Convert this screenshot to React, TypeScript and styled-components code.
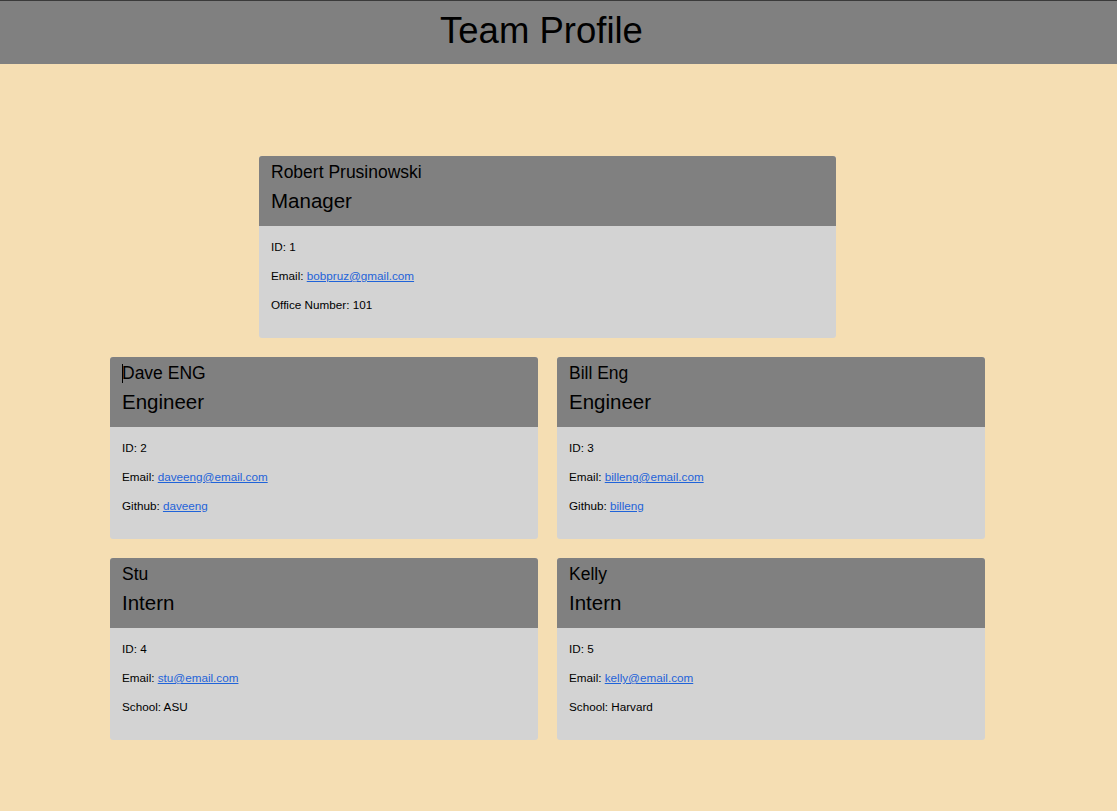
import React from "react";
import styled, { createGlobalStyle } from "styled-components";

const GlobalStyle = createGlobalStyle`
  html, body {
    margin: 0;
    padding: 0;
    background: #f5deb3;
    font-family: "Liberation Sans", Arial, sans-serif;
    color: #000;
  }
  * { box-sizing: border-box; }
`;

const Header = styled.header`
  height: 64px;
  background: #808080;
  border-top: 1px solid #3a3a3a;
  display: flex;
  align-items: center;
  justify-content: center;
  padding-right: 34px;
`;

const Title = styled.h1`
  margin: 0;
  font-size: 36.5px;
  font-weight: 400;
  line-height: 1;
  transform: translateY(-1px);
`;

const Main = styled.main`
  padding: 92px 22px 40px 0;
`;

const Grid = styled.div`
  width: 875px;
  margin: 0 auto;
  display: grid;
  grid-template-columns: 428px 428px;
  column-gap: 19px;
  row-gap: 19px;
  justify-content: center;
`;

const CardBox = styled.section<{ $wide?: boolean }>`
  border-radius: 3px;
  overflow: hidden;
  background: #d3d3d3;
  ${(p) =>
    p.$wide
      ? `grid-column: 1 / span 2; width: 577px; justify-self: center;`
      : ``}
`;

const CardHead = styled.div`
  background: #808080;
  height: 70px;
  padding: 6px 12px 0;
`;

const Name = styled.h3`
  margin: 0;
  font-size: 17.5px;
  font-weight: 400;
  line-height: 21px;
`;

const Role = styled.h4`
  margin: 6px 0 0;
  font-size: 20.5px;
  font-weight: 400;
  line-height: 24px;
`;

const Caret = styled.span`
  display: inline-block;
  width: 1px;
  height: 19px;
  background: #000;
  vertical-align: -4px;
  margin-right: -1px;
`;

const CardBody = styled.div`
  height: 112px;
  padding: 14px 12px 0;
`;

const Line = styled.p`
  margin: 0 0 15px;
  font-size: 11.7px;
  line-height: 14px;
`;

const Link = styled.a`
  color: #1f63d9;
  text-decoration: underline;
`;

type Member = {
  name: string;
  role: string;
  id: number;
  email: string;
  extraLabel: string;
  extra: string;
  extraLink?: boolean;
  caret?: boolean;
};

const manager: Member = {
  name: "Robert Prusinowski",
  role: "Manager",
  id: 1,
  email: "bobpruz@gmail.com",
  extraLabel: "Office Number",
  extra: "101",
};

const team: Member[] = [
  { name: "Dave ENG", role: "Engineer", id: 2, email: "daveeng@email.com", extraLabel: "Github", extra: "daveeng", extraLink: true, caret: true },
  { name: "Bill Eng", role: "Engineer", id: 3, email: "billeng@email.com", extraLabel: "Github", extra: "billeng", extraLink: true },
  { name: "Stu", role: "Intern", id: 4, email: "stu@email.com", extraLabel: "School", extra: "ASU" },
  { name: "Kelly", role: "Intern", id: 5, email: "kelly@email.com", extraLabel: "School", extra: "Harvard" },
];

function Card({ m, wide }: { m: Member; wide?: boolean }) {
  return (
    <CardBox $wide={wide}>
      <CardHead>
        <Name>
          {m.caret && <Caret />}
          {m.name}
        </Name>
        <Role>{m.role}</Role>
      </CardHead>
      <CardBody>
        <Line>ID: {m.id}</Line>
        <Line>
          Email: <Link href={`mailto:${m.email}`}>{m.email}</Link>
        </Line>
        <Line>
          {m.extraLabel}:{" "}
          {m.extraLink ? <Link href={`https://github.com/${m.extra}`}>{m.extra}</Link> : m.extra}
        </Line>
      </CardBody>
    </CardBox>
  );
}

export default function App() {
  return (
    <>
      <GlobalStyle />
      <Header>
        <Title>Team Profile</Title>
      </Header>
      <Main>
        <Grid>
          <Card m={manager} wide />
          {team.map((m) => (
            <Card key={m.id} m={m} />
          ))}
        </Grid>
      </Main>
    </>
  );
}
